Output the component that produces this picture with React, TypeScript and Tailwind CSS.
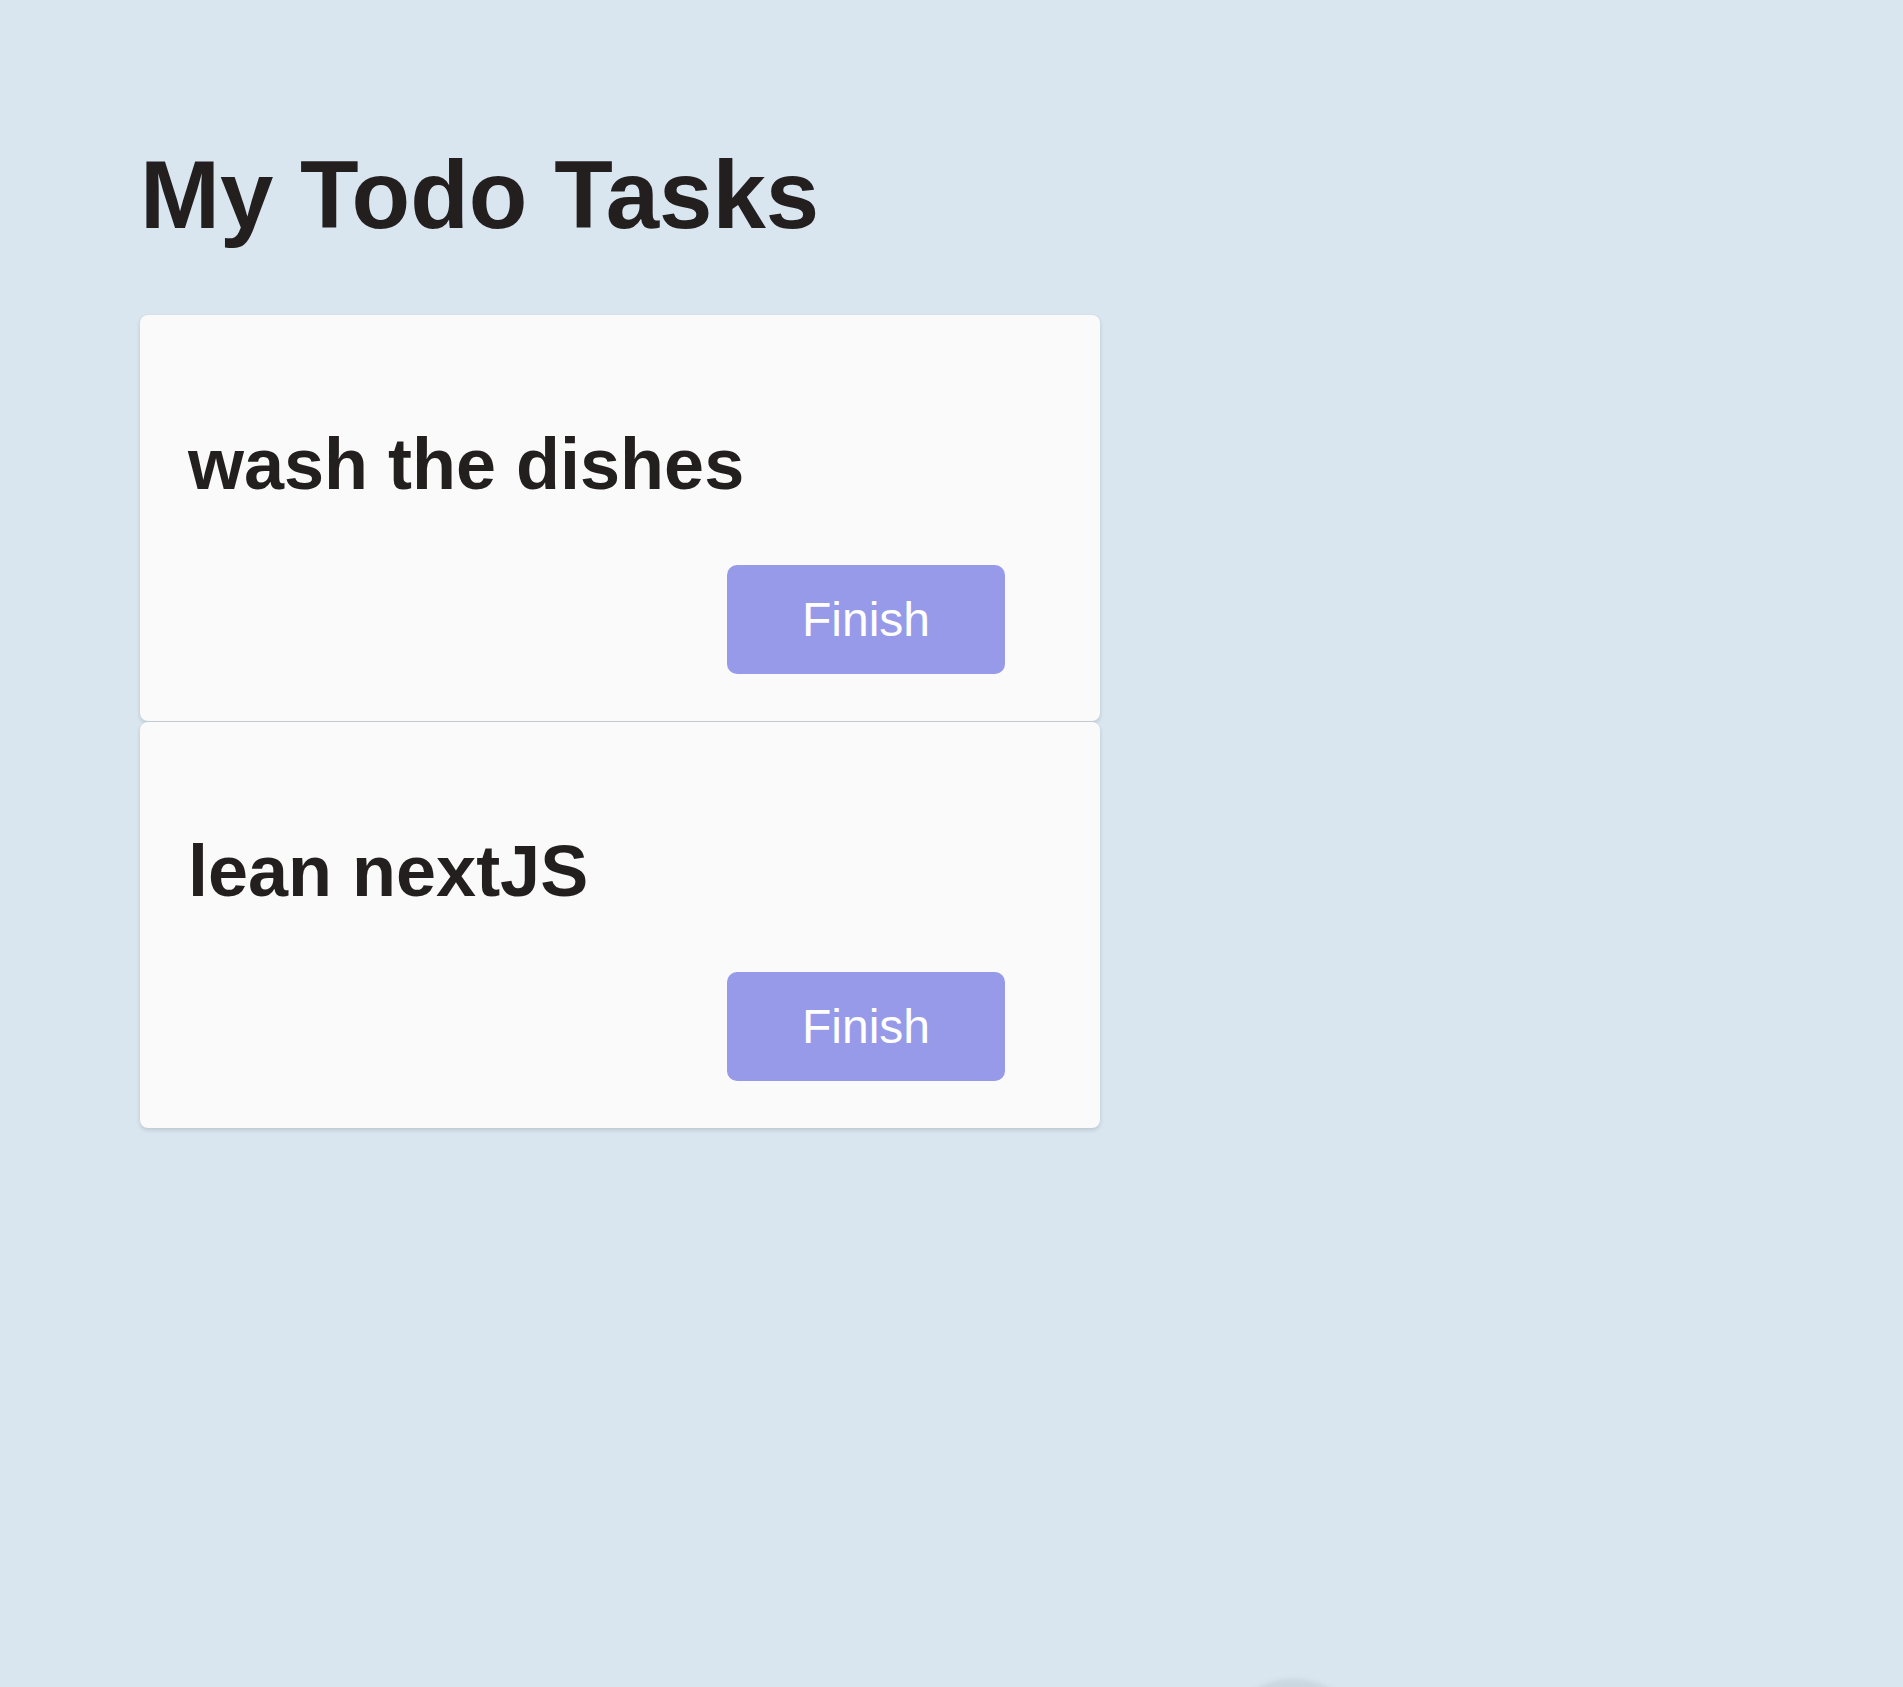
import React from "react";

const tasks = ["wash the dishes", "lean nextJS"];

export default function App() {
  return (
    <div
      className="relative min-h-[1687px] w-full overflow-hidden bg-[#d9e6ef] text-[#221f1e]"
      style={{ fontFamily: '"Liberation Sans", Arial, sans-serif' }}
    >
      <div className="pl-[140px] pt-[140px]">
        <h1 className="m-0 mb-[65px] text-[96px] font-bold leading-[110px]">My Todo Tasks</h1>
        <div className="flex w-[960px] flex-col gap-[1px]">
          {tasks.map((t) => (
            <div
              key={t}
              className="rounded-[8px] bg-[#fafafa] px-[48px] pt-[48px] pb-[47px] shadow-[0_2px_4px_rgba(0,0,0,0.14)]"
            >
              <h2 className="mt-[60px] mb-[59px] text-[72px] font-bold leading-[83px]">{t}</h2>
              <div className="flex justify-end pr-[47px]">
                <button className="h-[109px] w-[278px] rounded-[10px] bg-[#979ae8] text-[48px] leading-[55px] text-white">
                  Finish
                </button>
              </div>
            </div>
          ))}
        </div>
      </div>
      <div className="absolute left-[1215px] top-[1679px] h-[156px] w-[156px] rounded-full bg-[#cad7e1] blur-[2px]" />
    </div>
  );
}
